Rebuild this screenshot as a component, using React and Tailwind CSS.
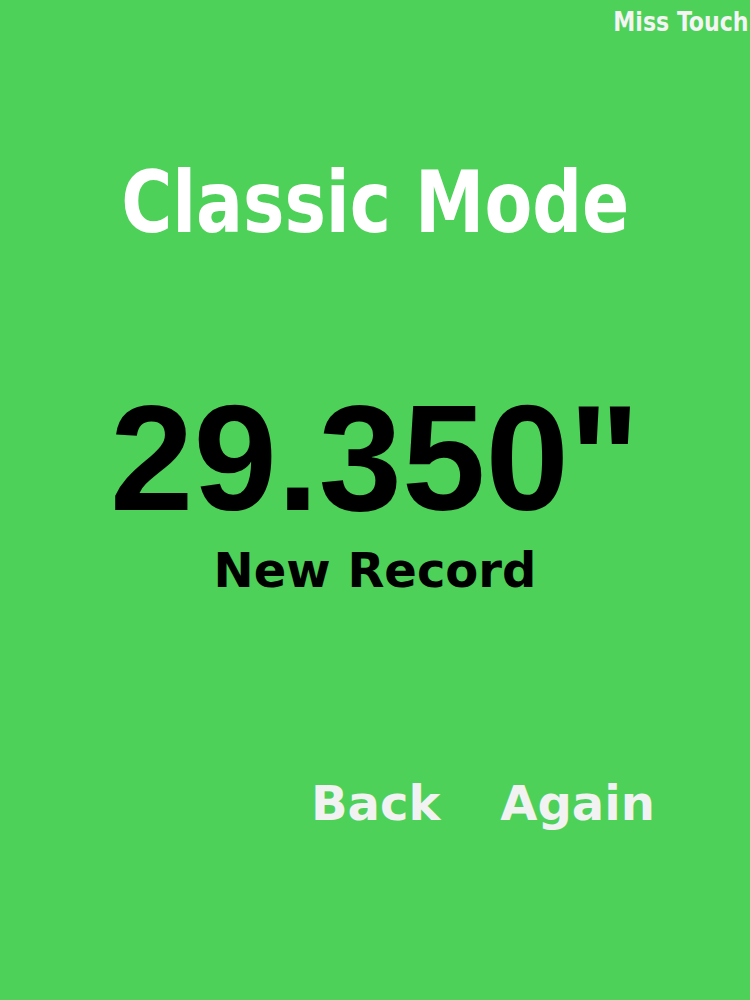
import React from 'react';

export default function App() {
  return (
    <div className="w-[750px] h-[1000px] bg-[#4dd158] flex flex-col overflow-hidden select-none">
      {/* top corner label */}
      <div className="flex justify-end pt-[8px] pr-[1px]">
        <span className="inline-block origin-right scale-x-[0.91] font-['DejaVu_Sans_Condensed','DejaVu_Sans',sans-serif] font-bold text-[27px] leading-none text-[#f4f4f4] whitespace-nowrap">
          Miss Touch
        </span>
      </div>

      <div className="mt-[125px] flex justify-center">
        <h1 className="inline-block origin-center scale-x-[0.91] font-['DejaVu_Sans_Condensed','DejaVu_Sans',sans-serif] font-bold text-[85px] leading-none text-white whitespace-nowrap">
          Classic Mode
        </h1>
      </div>

      <div className="mt-[138px] text-center font-['Liberation_Sans',Arial,sans-serif] font-bold text-[150px] leading-none text-black">
        29.350"
      </div>

      <div className="mt-[13px] text-center font-['DejaVu_Sans',Verdana,sans-serif] font-bold text-[48px] leading-none text-black">
        New Record
      </div>

      <div className="mt-[185px] flex pl-[311px] gap-[60px] font-['DejaVu_Sans',Verdana,sans-serif] font-bold text-[48px] leading-none text-[#f2f2f2]">
        <button className="leading-none">Back</button>
        <button className="leading-none">Again</button>
      </div>
    </div>
  );
}
